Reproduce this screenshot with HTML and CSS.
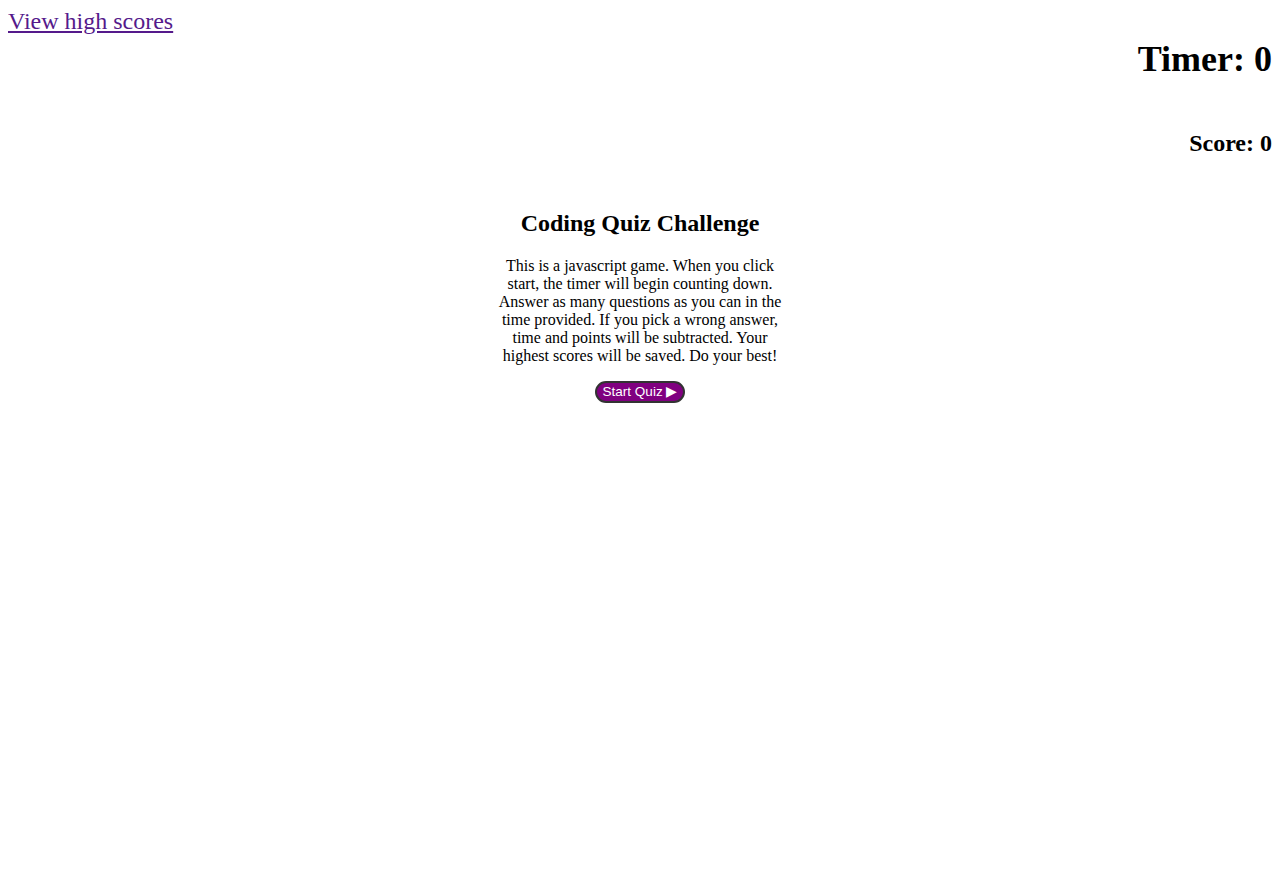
FILE: index.html
```html
<!DOCTYPE html>
<html>
<head>
<meta charset="utf-8">
<title>Coding Quiz</title>
<link rel="stylesheet" href="styles.css">
</head>
<body>
<header class="top">
  <a class="scores-link" href="#">View high scores</a>
  <h1 class="timer">Timer: 0</h1>
  <h2 class="score">Score: 0</h2>
</header>
<main class="intro">
  <h2 class="title">Coding Quiz Challenge</h2>
  <p class="desc">This is a javascript game. When you click start, the timer will begin counting down. Answer as many questions as you can in the time provided. If you pick a wrong answer, time and points will be subtracted. Your highest scores will be saved. Do your best!</p>
  <button class="start">Start Quiz &#9654;</button>
</main>
</body>
</html>
```
FILE: styles.css
```css
html, body {
  background: #fff;
}
body {
  margin: 8px;
  font-family: "Liberation Serif", "Times New Roman", serif;
  color: #000;
}
.top {
  display: flex;
  flex-direction: column;
}
.scores-link {
  align-self: flex-start;
  font-size: 24px;
  line-height: 27px;
  color: #551a8b;
  text-decoration: underline;
}
.timer {
  margin: 4px 0 0;
  font-size: 36px;
  line-height: 41px;
  text-align: right;
}
.score {
  margin: 49px 0 0;
  font-size: 24px;
  line-height: 28px;
  text-align: right;
}
.intro {
  display: flex;
  flex-direction: column;
  align-items: center;
}
.title {
  margin: 52px 0 0;
  font-size: 24px;
  line-height: 28px;
}
.desc {
  width: 300px;
  margin: 20px 0 0;
  font-size: 16px;
  line-height: 18px;
  text-align: center;
}
.start {
  margin-top: 16px;
  height: 22px;
  width: 90px;
  padding: 0;
  border: 2px solid #333;
  border-radius: 11px;
  background: #800080;
  color: #fff;
  font-family: "Liberation Sans", Arial, sans-serif;
  font-size: 13.5px;
  line-height: 16px;
  cursor: pointer;
}
```
